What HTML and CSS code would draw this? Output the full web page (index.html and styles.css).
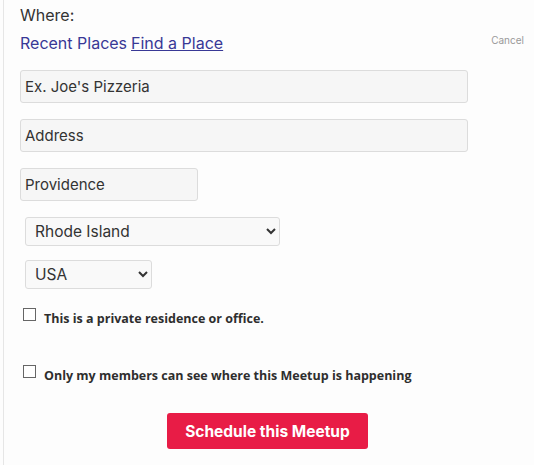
FILE: index.html
```html
<!DOCTYPE html>
<html lang="en">
<head>
  <meta charset="UTF-8">
  <meta name="viewport" content="width=device-width, initial-scale=1.0">
  <title>Where</title>
  <link rel="stylesheet" href="styles.css">
</head>
<body>
  <div class="panel">
    <div class="where">Where:</div>
    <div class="placeNav">
      <span class="recent">Recent Places</span>
      <a href="#" class="find">Find a Place</a>
      <a href="#" class="cancel">Cancel</a>
    </div>
    <input class="field wide" type="text" placeholder="Ex. Joe's Pizzeria">
    <input class="field wide" type="text" placeholder="Address">
    <input class="field city" type="text" value="Providence">
    <select class="pick state">
      <option>Rhode Island</option>
    </select>
    <select class="pick country">
      <option>USA</option>
    </select>
    <label class="check first">
      <span class="box"></span>
      <span class="checkText">This is a private residence or office.</span>
    </label>
    <label class="check second">
      <span class="box"></span>
      <span class="checkText">Only my members can see where this Meetup is happening</span>
    </label>
    <div class="actions">
      <button class="schedule">Schedule this Meetup</button>
    </div>
  </div>
</body>
</html>
```

FILE: styles.css
```css
/* --- page --- */
body {
  margin: 0;
  background: #fdfdfd;
  font-family: Inter, "Liberation Sans", sans-serif;
  color: #333;
}
.panel {
  margin-left: 3px;
  height: 465px;
  box-sizing: border-box;
  border-left: 1px solid #e6e6e6;
  padding: 5px 0 0 16px;
}
.where {
  font-size: 16px;
  line-height: 20px;
}
/* --- recent / find / cancel --- */
.placeNav {
  display: flex;
  align-items: baseline;
  margin-top: 8px;
  font-size: 16px;
  line-height: 20px;
  color: #383896;
}
.find {
  margin-left: 4px;
  color: #383896;
  text-decoration: underline;
}
.cancel {
  margin-left: auto;
  margin-right: 10px;
  font-size: 10px;
  color: #999;
  text-decoration: none;
  position: relative;
  top: -5px;
}
/* --- inputs --- */
.field {
  display: block;
  box-sizing: border-box;
  height: 33px;
  margin-top: 16px;
  padding: 0 4px;
  border: 1px solid #dcdcdc;
  border-radius: 3px;
  background: #f6f6f6;
  font-family: inherit;
  font-size: 15px;
  color: #333;
}
.field::placeholder {
  color: #333;
}
.field.wide {
  width: 448px;
}
.field.wide:first-of-type {
  margin-top: 15px;
}
.field.city {
  width: 178px;
}
.pick {
  display: block;
  box-sizing: border-box;
  height: 29px;
  margin: 16px 0 0 5px;
  padding: 0 5px;
  border: 1px solid #dcdcdc;
  border-radius: 3px;
  background: #f9f9f9;
  font-family: inherit;
  font-size: 15.5px;
  color: #333;
}
.pick.state {
  width: 255px;
}
.pick.country {
  width: 127px;
  margin-top: 14px;
}
/* --- checkboxes --- */
.check {
  display: flex;
  align-items: flex-start;
  font-family: "Open Sans", sans-serif;
  font-size: 12.5px;
  font-weight: bold;
  color: #2e2e2e;
}
.check.first {
  margin-top: 19px;
}
.check.second {
  margin-top: 38px;
}
.box {
  width: 11px;
  height: 11px;
  margin: 0 0 0 3px;
  border: 1px solid #666;
  background: #fff;
  flex: none;
}
.checkText {
  margin: 3px 0 0 8px;
  line-height: 16px;
}
/* --- schedule button --- */
.actions {
  display: flex;
  justify-content: center;
  margin: 29px 0 0 -19px;
}
.schedule {
  width: 201px;
  height: 36px;
  border: none;
  border-radius: 3px;
  background: #e81c46;
  color: #fff;
  font-family: inherit;
  font-size: 15.5px;
  font-weight: bold;
}
```
